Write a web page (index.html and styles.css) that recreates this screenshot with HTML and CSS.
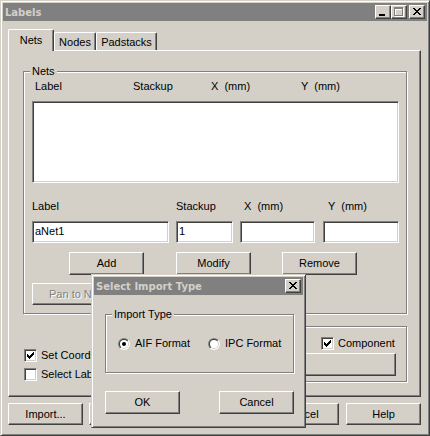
FILE: index.html
```html
<!DOCTYPE html>
<html lang="en">
<head>
<meta charset="utf-8">
<title>Labels</title>
<link rel="stylesheet" href="styles.css">
</head>
<body>
<div class="window">
  <div class="titlebar">
    <span class="title">Labels</span>
    <div class="cap-btns">
      <span class="cap-btn raised"><svg width="14" height="12" viewBox="0 0 14 12" shape-rendering="crispEdges"><rect x="3" y="8" width="6" height="2" fill="#000"/></svg></span>
      <span class="cap-btn raised"><svg width="14" height="12" viewBox="0 0 14 12" shape-rendering="crispEdges"><path fill="#fff" fill-rule="evenodd" d="M3 2h9v9H3z M4 4v6h7V4z"/><path fill="#808080" fill-rule="evenodd" d="M2 1h9v9H2z M3 3v6h7V3z"/></svg></span>
      <span class="cap-btn raised close"><svg width="14" height="12" viewBox="0 0 14 12" shape-rendering="crispEdges"><path fill="#000" d="M3 2h2v1H3z M9 2h2v1H9z M4 3h2v1H4z M8 3h2v1H8z M5 4h4v1H5z M6 5h2v1H6z M5 6h4v1H5z M4 7h2v1H4z M8 7h2v1H8z M3 8h2v1H3z M9 8h2v1H9z"/></svg></span>
    </div>
  </div>

  <div class="body">
    <div class="tabs">
      <div class="tab active t-nets">Nets</div>
      <div class="tab t-nodes">Nodes</div>
      <div class="tab t-pad">Padstacks</div>
    </div>

    <div class="panel">
      <fieldset class="group">
        <legend>Nets</legend>
        <div class="nets-body">
          <div class="list-head">
            <span class="c1">Label</span><span class="c2">Stackup</span><span class="c3">X  (mm)</span><span>Y  (mm)</span>
          </div>
          <div class="listbox sunken"></div>
          <div class="edit">
            <span>Label</span>
            <span>Stackup</span>
            <span class="lx">X  (mm)</span>
            <span class="ly">Y  (mm)</span>
            <div class="field sunken">aNet1</div>
            <div class="field sunken">1</div>
            <div class="field sunken"></div>
            <div class="field sunken fy"></div>
          </div>
          <div class="btn-row">
            <button class="btn raised add">Add</button>
            <button class="btn raised modify">Modify</button>
            <button class="btn raised remove">Remove</button>
          </div>
          <button class="btn raised pan">Pan to Net</button>
        </div>
      </fieldset>

      <div class="lower">
        <div class="checks">
          <div class="chk">
            <span class="check sunken"><svg width="11" height="11" viewBox="0 0 11 11" shape-rendering="crispEdges"><path fill="#000" d="M2 4h1v3H2z M3 5h1v3H3z M4 6h1v3H4z M5 5h1v3H5z M6 4h1v3H6z M7 3h1v3H7z M8 2h1v3H8z"/></svg></span>
            <span>Set Coordinates</span>
          </div>
          <div class="chk">
            <span class="check sunken"></span>
            <span>Select Label</span>
          </div>
        </div>
        <div class="sel-box">
          <div class="sel-row">
            <div class="chk">
              <span class="check sunken"><svg width="11" height="11" viewBox="0 0 11 11" shape-rendering="crispEdges"><path fill="#000" d="M2 4h1v3H2z M3 5h1v3H3z M4 6h1v3H4z M5 5h1v3H5z M6 4h1v3H6z M7 3h1v3H7z M8 2h1v3H8z"/></svg></span>
              <span>Component</span>
            </div>
          </div>
          <button class="btn raised sel-btn"></button>
        </div>
      </div>
    </div>

    <div class="footer">
      <button class="btn raised">Import...</button>
      <button class="btn raised"></button>
      <div class="footer-right">
        <button class="btn raised"></button>
        <button class="btn raised">Cancel</button>
        <button class="btn raised">Help</button>
      </div>
    </div>
  </div>

  <div class="dialog">
    <div class="titlebar">
      <span class="title">Select Import Type</span>
      <div class="cap-btns">
        <span class="cap-btn raised"><svg width="14" height="12" viewBox="0 0 14 12" shape-rendering="crispEdges"><path fill="#000" d="M3 2h2v1H3z M9 2h2v1H9z M4 3h2v1H4z M8 3h2v1H8z M5 4h4v1H5z M6 5h2v1H6z M5 6h4v1H5z M4 7h2v1H4z M8 7h2v1H8z M3 8h2v1H3z M9 8h2v1H9z"/></svg></span>
      </div>
    </div>
    <div class="dlg-body">
      <fieldset class="group">
        <legend>Import Type</legend>
        <div class="radio-row">
          <div class="radio-opt aif">
            <svg class="radio" width="12" height="12" viewBox="0 0 12 12">
              <defs>
                <linearGradient id="ro" x1="0" y1="0" x2="1" y2="1"><stop offset="0.5" stop-color="#808080"/><stop offset="0.5" stop-color="#ffffff"/></linearGradient>
                <linearGradient id="ri" x1="0" y1="0" x2="1" y2="1"><stop offset="0.5" stop-color="#404040"/><stop offset="0.5" stop-color="#d4d0c8"/></linearGradient>
              </defs>
              <circle cx="6" cy="6" r="6" fill="url(#ro)"/>
              <circle cx="6" cy="6" r="5" fill="url(#ri)"/>
              <circle cx="6" cy="6" r="4" fill="#fff"/>
              <circle cx="6" cy="6" r="2" fill="#000"/>
            </svg>
            <span>AIF Format</span>
          </div>
          <div class="radio-opt">
            <svg class="radio" width="12" height="12" viewBox="0 0 12 12">
              <circle cx="6" cy="6" r="6" fill="url(#ro)"/>
              <circle cx="6" cy="6" r="5" fill="url(#ri)"/>
              <circle cx="6" cy="6" r="4" fill="#fff"/>
            </svg>
            <span>IPC Format</span>
          </div>
        </div>
      </fieldset>
      <div class="dlg-btns">
        <button class="btn raised">OK</button>
        <button class="btn raised">Cancel</button>
      </div>
    </div>
  </div>
</div>
</body>
</html>
```

FILE: styles.css
```css
* { box-sizing: border-box; }

html, body { margin: 0; padding: 0; }

body {
  width: 430px;
  height: 436px;
  overflow: hidden;
  background: #d4d0c8;
  font-family: "Liberation Sans", Arial, sans-serif;
  font-size: 11px;
  line-height: 13px;
  color: #000;
}

/* generic 3D edges */
.raised {
  background: #d4d0c8;
  border: 1px solid;
  border-color: #fff #404040 #404040 #fff;
  box-shadow: inset -1px -1px #808080;
}

.sunken {
  background: #fff;
  border: 1px solid;
  border-color: #808080 #fff #fff #808080;
  box-shadow: inset 1px 1px #404040, inset -1px -1px #d4d0c8;
}

/* window frame */
.window,
.dialog {
  background: #d4d0c8;
  border: 1px solid;
  border-color: #d4d0c8 #404040 #404040 #d4d0c8;
  box-shadow: inset 1px 1px #fff, inset -1px -1px #808080;
  padding: 2px;
  display: flex;
  flex-direction: column;
}

.window {
  position: relative;
  width: 430px;
  height: 436px;
}

.titlebar {
  flex: none;
  height: 18px;
  background: #808080;
  display: flex;
  justify-content: space-between;
  align-items: flex-start;
  padding: 2px 2px 0 2px;
}

.title {
  font-family: "DejaVu Sans", sans-serif;
  font-weight: bold;
  font-size: 10px;
  line-height: 14px;
  color: #d4d0c8;
  margin-top: 1px;
  white-space: nowrap;
}

.cap-btns { display: flex; }

.cap-btn {
  width: 16px;
  height: 14px;
  display: block;
}

.cap-btn svg { display: block; }

.cap-btn.close { margin-left: 2px; }

/* body */
.body {
  flex: 1;
  display: flex;
  flex-direction: column;
  padding: 8px 6px 0 5px;
}

.tabs {
  flex: none;
  display: flex;
  align-items: flex-end;
  height: 21px;
  position: relative;
  z-index: 1;
}

.tab {
  height: 18px;
  border: 1px solid;
  border-bottom: none;
  border-color: #fff #404040 #404040 #fff;
  border-radius: 2px 2px 0 0;
  box-shadow: inset -1px 0 #808080;
  background: #d4d0c8;
  text-align: center;
  padding-top: 3px;
  white-space: nowrap;
}

.tab.active {
  height: 22px;
  margin-bottom: -1px;
  padding-top: 4px;
}

.t-nets { width: 46px; }
.t-nodes { width: 42px; }
.t-pad { width: 61px; }

.panel {
  flex: none;
  height: 347px;
  border: 1px solid;
  border-color: #fff #404040 #404040 #fff;
  box-shadow: inset -1px -1px #808080;
  padding: 14px 13px 0 14px;
}

fieldset.group {
  margin: 0;
  padding: 0;
  min-width: 0;
  border: 1px solid #808080;
  box-shadow: inset 1px 1px #fff, 1px 1px #fff;
}

fieldset.group > legend {
  margin-left: 6px;
  padding: 0 2px;
  line-height: 13px;
  background: #d4d0c8;
}

.nets-body { padding: 0 7px 8px 8px; }

.list-head {
  display: flex;
  margin-top: 2px;
  padding-left: 3px;
  white-space: pre;
}

.list-head .c1 { width: 98px; }
.list-head .c2 { width: 78px; }
.list-head .c3 { width: 90px; }

.listbox {
  margin-top: 8px;
  height: 82px;
}

.edit {
  display: grid;
  grid-template-columns: 137px 57px 75px 1fr;
  column-gap: 7px;
  row-gap: 8px;
  margin-top: 17px;
  white-space: pre;
}

.edit .lx { padding-left: 4px; }
.edit .ly { padding-left: 6px; }

.field {
  height: 22px;
  line-height: 19px;
  padding: 0 2px;
}

.edit .fy { margin-left: 1px; }

.btn {
  width: 75px;
  height: 23px;
  margin: 0;
  padding: 0;
  display: flex;
  align-items: center;
  justify-content: center;
  font-family: "Liberation Sans", Arial, sans-serif;
  font-size: 11px;
  line-height: 13px;
  color: #000;
  white-space: nowrap;
}

.btn-row {
  display: flex;
  margin-top: 9px;
}

.btn-row .add { margin-left: 37px; }
.btn-row .modify { margin-left: 32px; }
.btn-row .remove { margin-left: 31px; }

.pan {
  margin-top: 8px;
  width: 86px;
  height: 22px;
  color: #808080;
  text-shadow: 1px 1px #fff;
}

/* lower part */
.lower {
  display: flex;
  justify-content: space-between;
  align-items: flex-end;
  margin-top: 12px;
}

.checks {
  display: flex;
  flex-direction: column;
  gap: 6px;
  margin: 0 0 1px 1px;
}

.chk {
  display: flex;
  align-items: center;
  gap: 4px;
  height: 13px;
  white-space: nowrap;
}

.check {
  flex: none;
  width: 13px;
  height: 13px;
  display: block;
}

.check svg { display: block; }

.sel-box {
  width: 181px;
  height: 56px;
  border: 1px solid #808080;
  box-shadow: inset 1px 1px #fff, 1px 1px #fff;
  padding: 10px 10px 0 9px;
}

.sel-row {
  display: flex;
  padding-left: 85px;
}

.sel-btn {
  margin-top: 3px;
  width: 160px;
}

/* footer */
.footer {
  flex: none;
  display: flex;
  gap: 6px;
  margin-top: 6px;
}

.footer .btn { height: 22px; }

.footer-right {
  margin-left: auto;
  display: flex;
  gap: 7px;
}

/* dialog */
.dialog {
  position: absolute;
  left: 90px;
  top: 273px;
  width: 215px;
  height: 154px;
  z-index: 10;
}

.dlg-body { padding: 13px 9px 11px 11px; }

.radio-row {
  display: flex;
  padding: 16px 0 22px 12px;
}

.radio-opt {
  display: flex;
  align-items: center;
  gap: 5px;
  height: 13px;
  white-space: nowrap;
}

.radio-opt.aif { width: 90px; }

.radio { display: block; flex: none; }

.dlg-btns {
  display: flex;
  justify-content: space-between;
  margin-top: 18px;
}
```
